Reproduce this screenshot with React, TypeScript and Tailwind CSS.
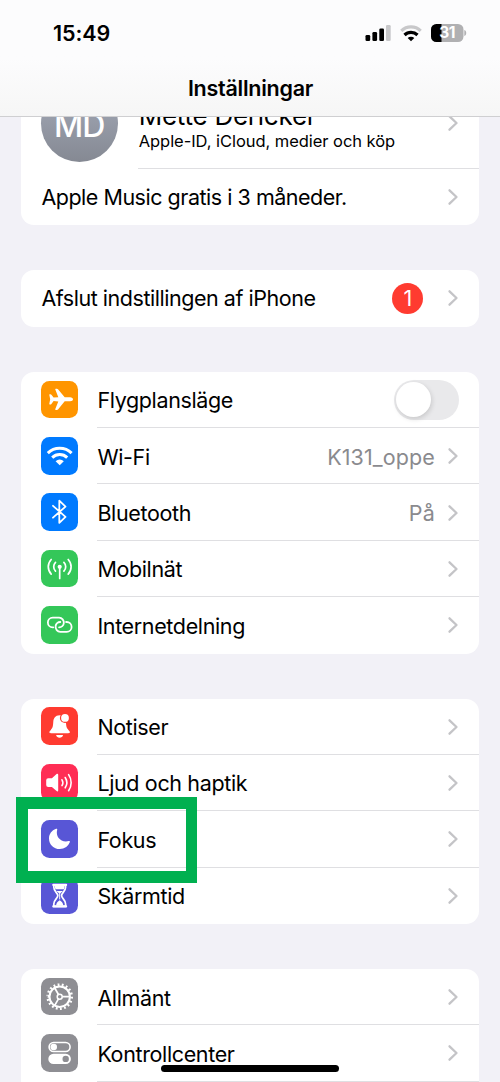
import type { ReactNode } from "react";
import clsx from "clsx";

const Chevron = () => (
  <svg width="12" height="18" viewBox="0 0 12 18" fill="none" className="-mt-px shrink-0">
    <path
      d="m2.5 2.3 7 6.7-7 6.7"
      stroke="#c4c4c7"
      strokeWidth="2.3"
      strokeLinecap="round"
      strokeLinejoin="round"
    />
  </svg>
);

const PlaneIcon = () => (
  <path
    fill="#fff"
    d="M29.2 16.3c1.7 0 2.8 1 2.8 2s-1.1 2-2.8 2h-5.500l-6.500 8q-.6.7-1.400.7h-1q-.8 0-.5-.9l3-7.700-4.700-.3-2.200 2.800q-.4.5-.9.5h-.7q-.6 0-.5-.6l.9-4.500-.9-4.500q-.1-.6.5-.6h.7q.5 0 .9.5l2.200 2.800 4.700-.3-3-7.700q-.3-.8.5-.8h1q.8 0 1.400.7l6.500 7.900z"
  />
);

const WifiIcon = () => (
  <g fill="none" stroke="#fff" strokeWidth="3">
    <path d="M6.8 16.1a17 17 0 0 1 23.8 0" />
    <path d="M11.2 20.6a10.8 10.8 0 0 1 15 0" />
    <path d="m18.7 28.2-4.100-4a5.900 5.900 0 0 1 8.200 0z" fill="#fff" stroke="none" />
  </g>
);

const BluetoothIcon = () => (
  <path
    d="m12 12.8 12.5 11.1-6.2 5.9V7.7l6.2 5.9L12 24.7"
    fill="none"
    stroke="#fff"
    strokeWidth="1.8"
    strokeLinejoin="round"
    strokeLinecap="round"
  />
);

const AntennaIcon = () => (
  <g fill="none" stroke="#fff" strokeWidth="1.7" strokeLinecap="round">
    <circle cx="18.7" cy="16.8" r="2.1" fill="#fff" stroke="none" />
    <path d="M18.7 17v11.5" />
    <path d="M14.5 12.4a6.3 6.3 0 0 0 0 8.8M22.9 12.4a6.3 6.3 0 0 1 0 8.8" />
    <path d="M10.200 9.500a10.600 10.600 0 0 0 0 14.600M27.200 9.500a10.600 10.600 0 0 1 0 14.600" />
  </g>
);

const LinkIcon = () => (
  <g fill="none" stroke="#fff" strokeWidth="1.8" strokeLinecap="round">
    <path d="M12.3 21.3h-.6a4.8 4.8 0 0 1 0-9.7h6.4a4.9 4.9 0 0 1 4.7 5.5 4.7 4.7 0 0 1-4.7 4.2" />
    <path d="M25.1 16h.6a4.9 4.9 0 0 1 0 9.8h-6.4a4.9 4.9 0 0 1-4.7-5.6 4.7 4.7 0 0 1 4.7-4.2" />
  </g>
);

const BellIcon = () => (
  <>
    <path
      fill="#fff"
      d="M18.500 8.200c-4.200 0-6 3-6.200 6.400-.3 5.400-.7 6.400-2.500 8.300-.9 1-1.400 1.600-1.400 2.200 0 .8.600 1.200 1.500 1.200h17.400c1 0 1.600-.4 1.600-1.200 0-.6-.6-1.200-1.500-2.200-1.800-1.900-2.200-2.900-2.500-8.300-.2-3.400-2.200-6.400-6.400-6.400M15.100 27.900h7c-.4 1.700-1.800 2.800-3.500 2.800s-3.100-1.100-3.500-2.800"
    />
    <circle cx="24" cy="10.9" r="5.1" fill="#ff3b30" />
    <circle cx="24" cy="10.9" r="3.9" fill="#fff" />
  </>
);

const SpeakerIcon = () => (
  <g fill="none" stroke="#fff" strokeWidth="1.6" strokeLinecap="round">
    <path
      stroke="none"
      fill="#fff"
      d="M7.200 14.300h3.700l4.700-4.200c.7-.6 1.600-.2 1.600.7v15.600c0 .9-.9 1.300-1.600.7l-4.700-4.200H7.200q-2 0-2-2v-4.600q0-2 2-2"
    />
    <path d="M21 15.800a5.500 5.500 0 0 1 0 5.800M24.200 13.500a9.500 9.500 0 0 1 0 10.300M27.600 10.600a14 14 0 0 1 0 16.100" />
  </g>
);

const MoonIcon = () => (
  <path
    fill="#fff"
    d="M15.100 8.800c.7-.4 1.400.1 1.100.9-2 7 4 13.300 11.500 11.300.9-.3 1.500.4 1.100 1.200A11 11 0 0 1 18.800 29C12.600 29 8 24.400 8 18.400c0-4.200 2.600-8 7.100-9.600"
  />
);

const HourglassIcon = () => (
  <g stroke="#fff" strokeLinejoin="round" strokeLinecap="round">
    <path
      fill="none"
      strokeWidth="1.7"
      d="M12.800 7.800v2.500c0 4.200 4 5.600 4 8.300s-4 4.200-4 8.300v2.500h11.800v-2.500c0-4.100-4-5.600-4-8.300s4-4.100 4-8.300V7.800z"
    />
    <path d="M12.3 7.900h12.8M12.3 29.4h12.8" strokeWidth="2.2" />
    <path
      fill="#fff"
      stroke="none"
      d="M13.700 8.500h10c0 1.500-.3 2.800-.8 3.800h-8.400c-.5-1-.8-2.300-.8-3.800M15.500 13.900h6.400c-.9 1-2 1.500-2.400 2.300h-1.600c-.4-.8-1.500-1.300-2.400-2.300M18.700 23.200c1.900 1.300 3.300 2.600 3.700 5.200H15c.4-2.600 1.800-3.900 3.700-5.200"
    />
    <path d="M18.700 16v6" strokeWidth="1" />
  </g>
);

const GearIcon = () => (
  <g fill="none" stroke="#fff">
    <circle cx="18.7" cy="18.7" r="12" strokeWidth="2.6" pathLength="90" strokeDasharray="2.2 2.8" />
    <circle cx="18.7" cy="18.7" r="10.2" strokeWidth="2" />
    <circle cx="18.7" cy="18.7" r="2.5" strokeWidth="1.5" />
    <path d="M21.2 18.7h8M17.45 16.5l-4-7M17.45 20.9l-4 7" strokeWidth="1.7" />
  </g>
);

const SwitchesIcon = () => (
  <>
    <rect x="8.1" y="8.5" width="21" height="9" rx="4.5" fill="none" stroke="#fff" strokeWidth="1.6" />
    <circle cx="12.7" cy="13" r="3.3" fill="#fff" />
    <rect x="7.3" y="19.7" width="22.6" height="10.4" rx="5.2" fill="#fff" />
    <circle cx="24.7" cy="24.9" r="3.2" fill="#8e8e93" />
  </>
);

interface Item {
  label: string;
  color: string;
  icon: ReactNode;
  value?: string;
  toggle?: boolean;
}

const connectivity: Item[] = [
  { label: "Flygplansläge", color: "bg-[#ff9500]", icon: <PlaneIcon />, toggle: true },
  { label: "Wi-Fi", color: "bg-[#007aff]", icon: <WifiIcon />, value: "K131_oppe" },
  { label: "Bluetooth", color: "bg-[#007aff]", icon: <BluetoothIcon />, value: "På" },
  { label: "Mobilnät", color: "bg-[#34c759]", icon: <AntennaIcon /> },
  { label: "Internetdelning", color: "bg-[#34c759]", icon: <LinkIcon /> },
];

const alerts: Item[] = [
  { label: "Notiser", color: "bg-[#ff3b30]", icon: <BellIcon /> },
  { label: "Ljud och haptik", color: "bg-[#ff2d55]", icon: <SpeakerIcon /> },
  { label: "Fokus", color: "bg-[#5856d6]", icon: <MoonIcon /> },
  { label: "Skärmtid", color: "bg-[#5856d6]", icon: <HourglassIcon /> },
];

const general: Item[] = [
  { label: "Allmänt", color: "bg-[#8e8e93]", icon: <GearIcon /> },
  { label: "Kontrollcenter", color: "bg-[#8e8e93]", icon: <SwitchesIcon /> },
];

const Toggle = () => (
  <button
    type="button"
    role="switch"
    aria-checked={false}
    aria-label="Flygplansläge"
    className="-mt-px flex h-10 w-[65.5px] items-center rounded-full bg-[#e9e9eb] p-[2.5px]"
  >
    <span className="size-[35px] rounded-full bg-white shadow-[1px_2px_5px_rgba(0,0,0,0.14)]" />
  </button>
);

const Row = ({ item, last }: { item: Item; last: boolean }) => (
  <li className="flex h-[56.35px] items-center pl-5">
    <span
      className={clsx("-mt-px size-[37.5px] shrink-0 overflow-hidden rounded-[8.5px]", item.color)}
    >
      <svg viewBox="0 0 37.5 37.5" className="size-full">
        {item.icon}
      </svg>
    </span>
    <div
      className={clsx(
        "ml-[18.5px] flex h-full flex-1 items-center border-b pt-0.5 pr-5 pl-[0.7px]",
        last ? "border-transparent" : "border-[#dfdfe2]",
      )}
    >
      <span className="flex-1 tracking-[-0.36px] whitespace-nowrap">{item.label}</span>
      {item.toggle ? (
        <Toggle />
      ) : (
        <>
          {item.value && (
            <span className="mr-[12.5px] tracking-[0.1px] text-[#8a8a8e]">{item.value}</span>
          )}
          <Chevron />
        </>
      )}
    </div>
  </li>
);

const Group = ({ items, open = false }: { items: Item[]; open?: boolean }) => (
  <ul className={clsx("shrink-0 bg-white", open ? "rounded-t-[13px]" : "rounded-[13px]")}>
    {items.map((item, i) => (
      <Row key={item.label} item={item} last={!open && i === items.length - 1} />
    ))}
  </ul>
);

const StatusBar = () => (
  <div className="flex h-[66px] items-center pr-[33px] pl-[53px]">
    <span className="flex-1 pt-px text-[21.5px] font-semibold tracking-[-0.1px]">15:49</span>
    <svg width="102" height="20" viewBox="0 0 102 20">
      <rect x="0.5" y="12" width="4.7" height="6" rx="1.3" />
      <rect x="7.4" y="9" width="4.7" height="9" rx="1.3" />
      <rect x="14.3" y="5.5" width="4.7" height="12.5" rx="1.3" />
      <rect x="21" y="2" width="4.7" height="16" rx="1.3" fill="#c8c8ca" />
      <g fill="none" strokeWidth="3.2">
        <path d="M36.3 7.800a14.200 14.200 0 0 1 19.400 0" stroke="#c8c8ca" />
        <path d="M39.5 12a9.300 9.300 0 0 1 13 0" stroke="#000" />
      </g>
      <path d="m46 18.200-3.300-3.100a4.700 4.700 0 0 1 6.600 0z" />
      <clipPath id="battery">
        <rect x="66" y="1" width="32.5" height="18" rx="5.5" />
      </clipPath>
      <g clipPath="url(#battery)">
        <rect x="66" y="1" width="33" height="18" fill="#b0b0b2" />
        <rect x="66" y="1" width="10.5" height="18" />
      </g>
      <path d="M99.3 7v6c1.500-.7 1.900-1.800 1.900-3s-.4-2.300-1.900-3" fill="#b0b0b2" />
      <text x="82.2" y="15.4" textAnchor="middle" fontSize="15.5" fontWeight="700" fill="#fff">
        31
      </text>
    </svg>
  </div>
);

export default function App() {
  return (
    <div className="relative flex h-[1082px] w-[500px] flex-col overflow-hidden bg-[#f2f1f7] font-['Inter','Liberation_Sans',sans-serif] text-[21.5px] tracking-[-0.3px] text-black">
      <header className="h-[117px] shrink-0 border-b border-[#cfcfd1] bg-linear-to-b from-[#fcfcfd] from-50% to-[#f6f6f6]">
        <StatusBar />
        <h1 className="flex h-[43px] items-center justify-center pl-px text-[21.5px] leading-6 font-semibold tracking-[-0.25px]">
          Inställningar
        </h1>
      </header>

      <main className="flex min-h-0 flex-1 flex-col gap-[45.05px] overflow-hidden px-[20.7px]">
        <section className="-mt-[38px] shrink-0 rounded-[13px] bg-white">
          <div className="flex h-[90px] pl-5">
            <span className="mt-[6px] flex size-[77px] shrink-0 items-center justify-center rounded-full bg-linear-to-b from-[#a5abb9] to-[#858993] pt-1 text-[32px] font-medium tracking-[-1px] text-white">
              MD
            </span>
            <div className="ml-5 flex flex-1 items-center border-b border-[#dfdfe2] pr-5">
              <div className="flex-1 pt-[3px] pl-px whitespace-nowrap">
                <p className="text-[26px] leading-8 tracking-[-0.25px]">Mette Dericker</p>
                <p className="text-[16.5px] leading-[19px] tracking-[-0.05px]">
                  Apple-ID, iCloud, medier och köp
                </p>
              </div>
              <Chevron />
            </div>
          </div>
          <div className="flex h-[56.35px] items-center pr-5 pl-[20.7px]">
            <span className="flex-1 tracking-[-0.48px]">Apple Music gratis i 3 måneder.</span>
            <Chevron />
          </div>
        </section>

        <section className="flex h-[56.35px] shrink-0 items-center rounded-[13px] bg-white pr-5 pl-[20.7px]">
          <span className="flex-1 tracking-[-0.46px]">Afslut indstillingen af iPhone</span>
          <span className="mr-6 flex size-[31px] items-center justify-center rounded-full bg-[#ff3b30] text-white">
            1
          </span>
          <Chevron />
        </section>

        <Group items={connectivity} />
        <Group items={alerts} />
        <Group items={general} open />
      </main>

      {/* Highlight around the Fokus row */}
      <div className="absolute top-[797px] left-4 h-[86px] w-[181px] border-12 border-r-11 border-[#00b050]" />

      {/* Home indicator */}
      <div className="absolute top-[1065px] left-[161px] h-[7px] w-[178px] rounded-full bg-black" />
    </div>
  );
}
